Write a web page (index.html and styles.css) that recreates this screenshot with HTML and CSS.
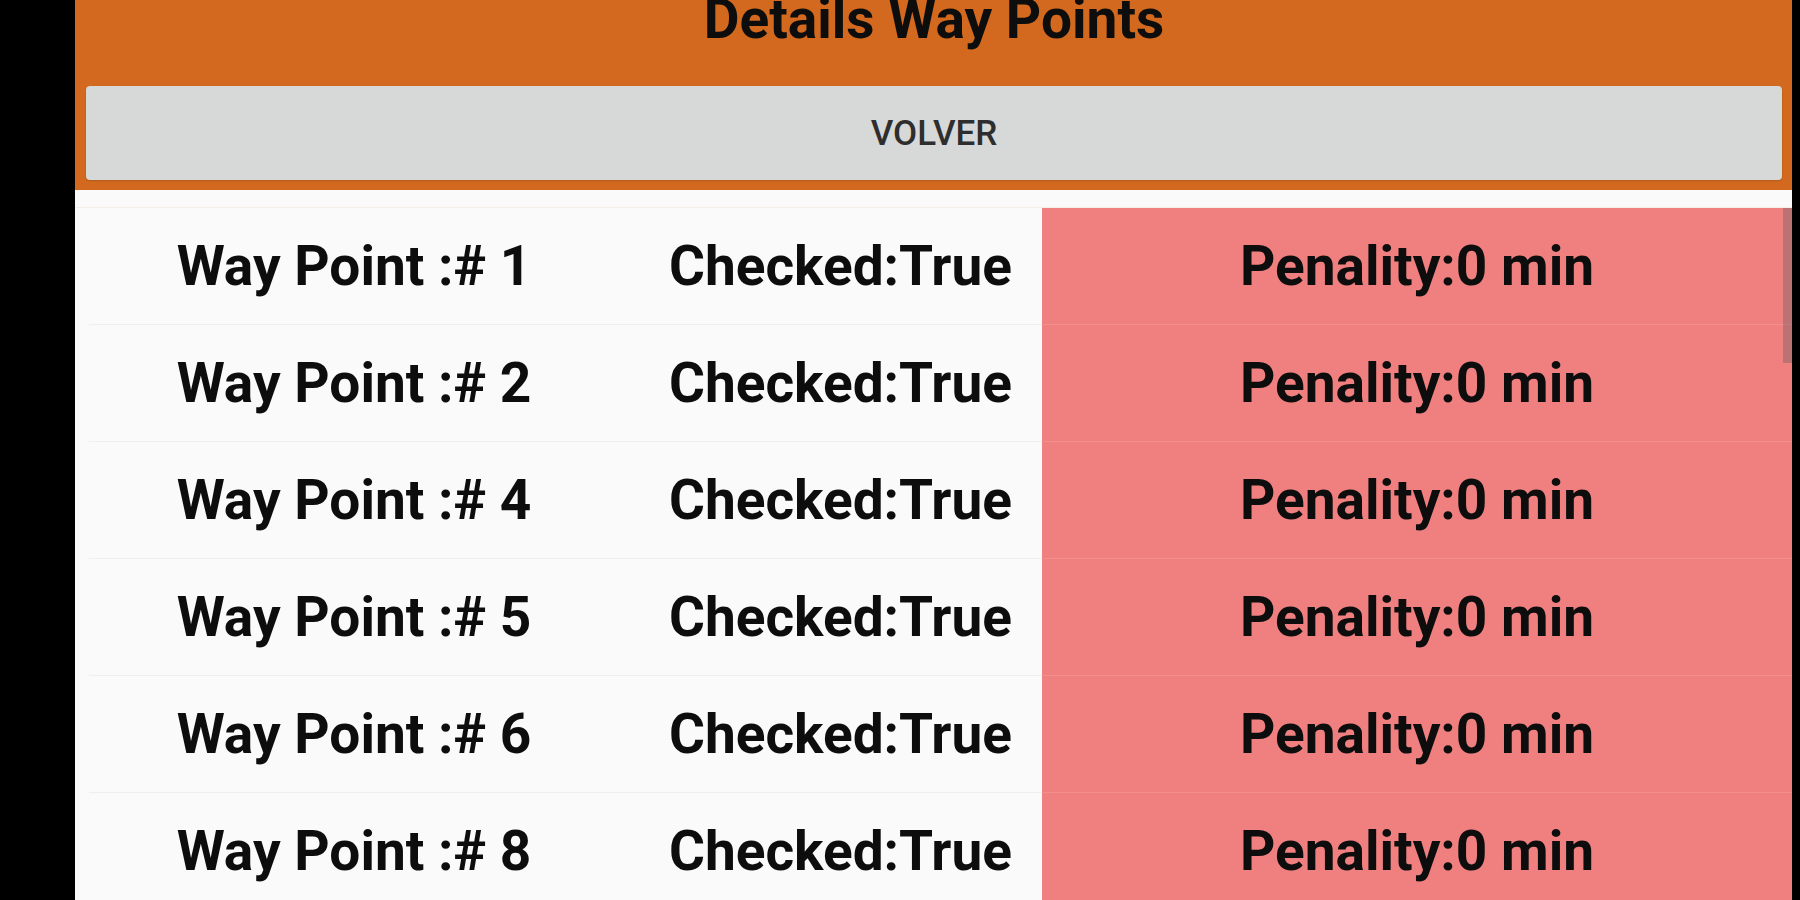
FILE: index.html
```html
<!DOCTYPE html>
<html lang="es">
<head>
    <meta charset="UTF-8">
    <meta name="viewport" content="width=device-width, initial-scale=1.0">
    <title>Details Way Points</title>
    <link rel="stylesheet" href="styles.css">
</head>
<body>
    <div class="screen">
        <div class="header">
            <h1 class="title">Details Way Points</h1>
            <button class="back-btn">VOLVER</button>
        </div>

        <!--lista de way points-->
        <div class="list">
            <div class="scroll-thumb"></div>
            <div class="row">
                <div class="cell point">Way Point :# 1</div>
                <div class="cell checked">Checked:True</div>
                <div class="cell penalty">Penality:0 min</div>
            </div>
            <div class="row">
                <div class="cell point">Way Point :# 2</div>
                <div class="cell checked">Checked:True</div>
                <div class="cell penalty">Penality:0 min</div>
            </div>
            <div class="row">
                <div class="cell point">Way Point :# 4</div>
                <div class="cell checked">Checked:True</div>
                <div class="cell penalty">Penality:0 min</div>
            </div>
            <div class="row">
                <div class="cell point">Way Point :# 5</div>
                <div class="cell checked">Checked:True</div>
                <div class="cell penalty">Penality:0 min</div>
            </div>
            <div class="row">
                <div class="cell point">Way Point :# 6</div>
                <div class="cell checked">Checked:True</div>
                <div class="cell penalty">Penality:0 min</div>
            </div>
            <div class="row">
                <div class="cell point">Way Point :# 8</div>
                <div class="cell checked">Checked:True</div>
                <div class="cell penalty">Penality:0 min</div>
            </div>
        </div>
    </div>
</body>
</html>
```

FILE: styles.css
```css
* {
    margin: 0;
    padding: 0;
    box-sizing: border-box;
}

html, body {
    height: 100%;
    overflow: hidden;
}

body {
    background-color: #000;
    font-family: Roboto, "Liberation Sans", Arial, sans-serif;
    color: #0d0d0d;
}

.screen {
    margin-left: 75px;
    width: 1717px;
    height: 100%;
    background-color: #fafafa;
}

.header {
    background-color: #d2691e;
    padding: 0 10px 10px 11px;
}

.title {
    font-size: 55px;
    font-weight: 700;
    line-height: 39px;
    text-align: center;
    margin-bottom: 47px;
}

.back-btn {
    display: block;
    width: 100%;
    height: 94px;
    border: none;
    border-radius: 4px;
    background-color: #d7d8d8;
    font-family: Roboto, "Liberation Sans", Arial, sans-serif;
    font-size: 35px;
    font-weight: 500;
    color: #2e2e2e;
    box-shadow: 0 1px 2px rgba(0, 0, 0, 0.15);
}

.list {
    position: relative;
    margin-top: 17px;
    border-top: 1px solid #f4efe9;
}

.row {
    display: grid;
    grid-template-columns: 544px 423px 1fr;
    height: 117px;
}

.cell {
    display: flex;
    align-items: center;
    justify-content: center;
    font-size: 55px;
    font-weight: 700;
    border-bottom: 1px solid #efefef;
}

.point {
    margin-left: 14px;
}

.checked {
    padding-left: 20px;
}

.penalty {
    background-color: #f08080;
    border-bottom-color: #f28e8e;
}

.scroll-thumb {
    position: absolute;
    top: 0;
    right: 0;
    width: 9px;
    height: 155px;
    background-color: rgba(90, 90, 90, 0.35);
    z-index: 1;
}
```
